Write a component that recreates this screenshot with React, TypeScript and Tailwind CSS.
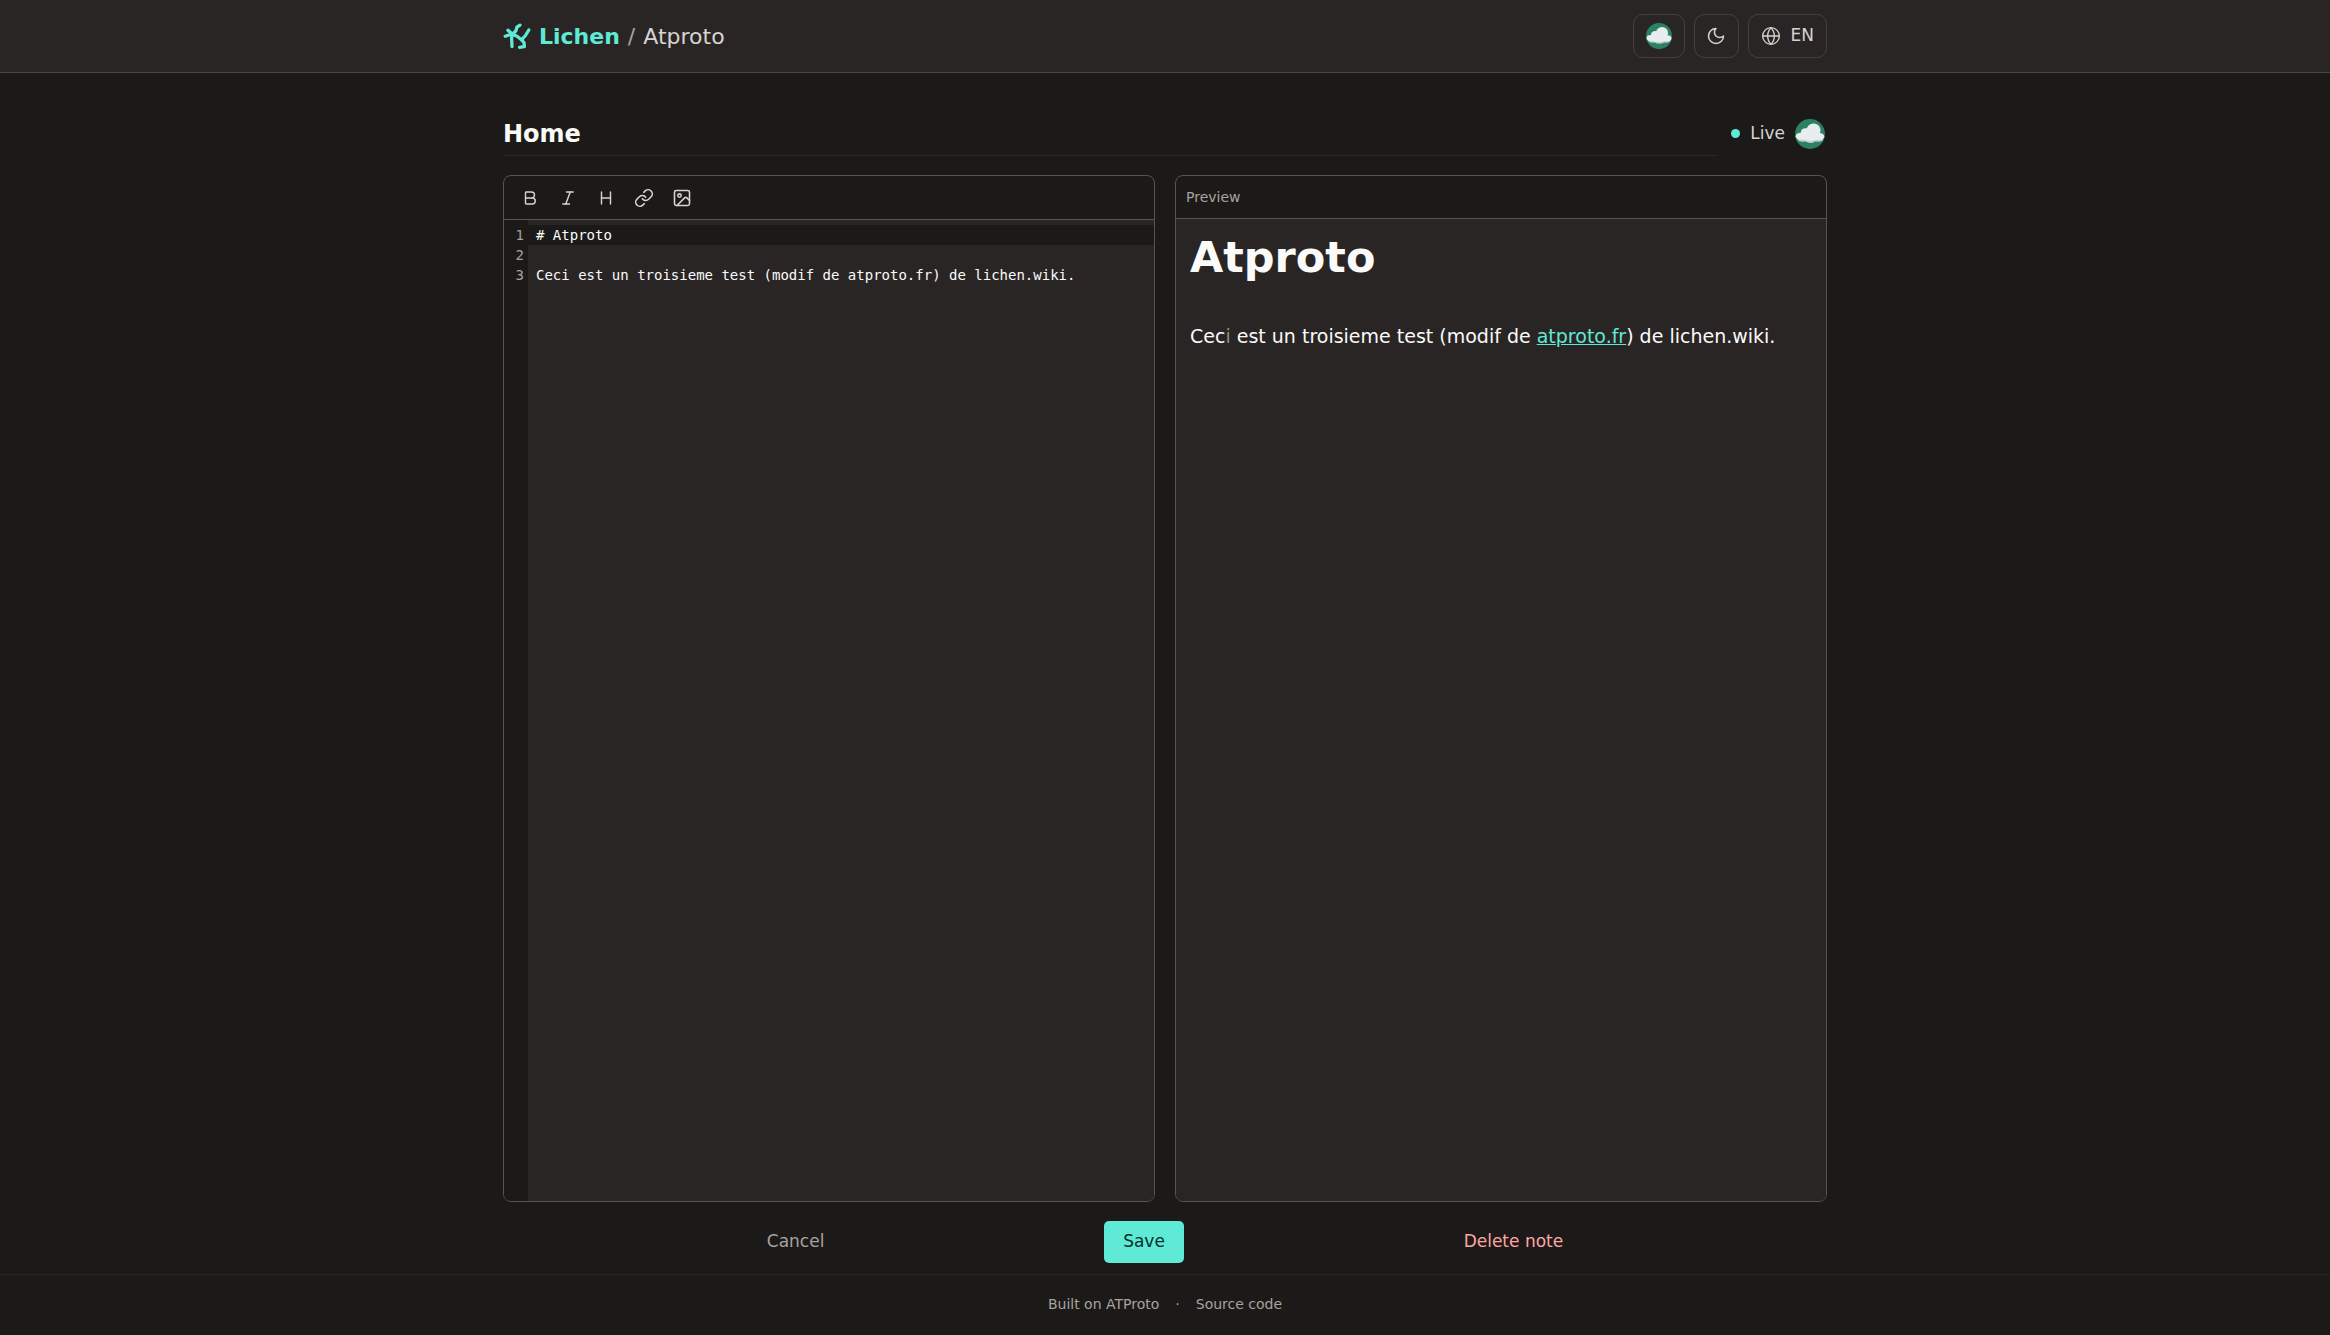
import React from "react";
import { Bold, Italic, Heading, Link, Image, Globe } from "lucide-react";

function LichenMark() {
  return (
    <svg viewBox="0 0 28 28" className="size-7" fill="none" stroke="currentColor" strokeWidth="3.3" strokeLinecap="round" strokeLinejoin="round" aria-hidden="true">
      <path d="M2.200 14.300 L6 13 L9.300 12.300 L14 14.200 L18.500 17.800 L22.500 13.500 L25.800 8" />
      <path d="M5 8.200 L9.300 12.300 L8.600 16 L9 24.500" />
      <path d="M9.300 12.300 L12.800 9 L14 5 L17 3.200" />
      <path d="M18.500 17.800 L21 20.500 L21.400 24.700 L16.500 25.300" />
    </svg>
  );
}

function MoonIcon() {
  return (
    <svg viewBox="0 0 24 24" className="size-5" fill="none" stroke="currentColor" strokeWidth="1.8" strokeLinecap="round" strokeLinejoin="round" aria-hidden="true">
      <path d="M12 3a6 6 0 0 0 9 9 9 9 0 1 1-9-9Z" />
    </svg>
  );
}

function CloudAvatar({ className }: { className: string }) {
  return (
    <svg viewBox="0 0 30 30" className={className} aria-hidden="true">
      <circle cx="15" cy="15" r="15" fill="#2b8263" />
      <g fill="#c3d0d5">
        <ellipse cx="8" cy="20" rx="5.500" ry="2.800" />
        <ellipse cx="15.500" cy="21" rx="5.500" ry="2.900" />
        <ellipse cx="23" cy="20" rx="5" ry="2.800" />
      </g>
      <g fill="#e8eeef">
        <ellipse cx="5.500" cy="17.300" rx="4.800" ry="3.500" />
        <circle cx="10.500" cy="14" r="4.800" />
        <circle cx="18.500" cy="11.500" r="7" />
        <ellipse cx="24.500" cy="17.500" rx="4.800" ry="3.500" />
        <ellipse cx="15" cy="18" rx="9" ry="3.800" />
      </g>
    </svg>
  );
}

const tools = [
  { label: "Bold", Icon: Bold, size: 18 },
  { label: "Italic", Icon: Italic, size: 18 },
  { label: "Heading", Icon: Heading, size: 18 },
  { label: "Link", Icon: Link, size: 20 },
  { label: "Image", Icon: Image, size: 20 },
];

const lines = ["# Atproto", "", "Ceci est un troisieme test (modif de atproto.fr) de lichen.wiki."];

const headerButton =
  "flex h-11 items-center justify-center rounded-[10px] border border-[#44403c] text-[#d6d3d1]";

export default function App() {
  return (
    <div className="flex min-h-screen flex-col bg-[#1c1a18] font-['DejaVu_Sans',sans-serif] text-[#fafaf9]">
      <header className="border-b border-[#4a4745] bg-[#2a2525]">
        <div className="mx-auto flex h-18 w-full max-w-[1356px] items-center justify-between px-4">
          <nav className="flex items-center text-[22px]" aria-label="Breadcrumb">
            <a href="#" className="flex items-center gap-2 font-bold text-[#5eead4]">
              <LichenMark />
              Lichen
            </a>
            <span className="px-2 text-[#a8a29e]">/</span>
            <a href="#" className="text-[#d6d3d1]">Atproto</a>
          </nav>
          <div className="flex items-center gap-[9px]">
            <button type="button" aria-label="Account" className={headerButton + " w-[52px]"}>
              <CloudAvatar className="size-[26px]" />
            </button>
            <button type="button" aria-label="Dark theme" className={headerButton + " w-[45px]"}>
              <MoonIcon />
            </button>
            <button type="button" className={headerButton + " gap-2.5 px-3 text-[17px]"}>
              <Globe size={20} strokeWidth={1.6} />
              EN
            </button>
          </div>
        </div>
      </header>

      <main className="mx-auto flex w-full max-w-[1356px] flex-1 flex-col px-4 pt-10 pb-[11px]">
        <div className="flex items-start">
          <h1 className="flex-1 border-b border-[#2c2927] py-[5px] text-2xl font-bold">Home</h1>
          <div className="flex h-[41px] items-center gap-2.5 pr-0.5 pl-3.5 text-[17px] text-[#d6d3d1]">
            <span className="size-[9px] rounded-full bg-[#5eead4]" />
            <span>Live</span>
            <CloudAvatar className="size-[30px]" />
          </div>
        </div>

        <div className="mt-[19px] grid flex-1 grid-cols-2 gap-5">
          <section className="flex flex-col overflow-hidden rounded-lg border border-[#57534e]" aria-label="Editor">
            <div className="flex h-11 items-center border-b border-[#57534e] px-[7px] text-[#d6d3d1]">
              {tools.map(({ label, Icon, size }) => (
                <button key={label} type="button" aria-label={label} className="flex h-9 w-[38px] items-center justify-center">
                  <Icon size={size} strokeWidth={1.9} />
                </button>
              ))}
            </div>
            <div className="flex flex-1 bg-[#2a2525] font-['DejaVu_Sans_Mono',monospace] text-sm leading-5">
              <div className="w-6 bg-[#1c1a18] pt-[5px] pr-1 text-right text-[#a8a29e]">
                {lines.map((_, i) => (
                  <div key={i}>{i + 1}</div>
                ))}
              </div>
              <div className="flex-1">
                <div className="h-[5px] bg-[#272624]" />
                {lines.map((line, i) => (
                  <div key={i} className={i === 0 ? "h-5 bg-[#1c1a18] pl-2" : "h-5 pl-2"}>{line}</div>
                ))}
              </div>
            </div>
          </section>

          <section className="flex flex-col overflow-hidden rounded-lg border border-[#57534e]" aria-label="Preview">
            <div className="flex h-[43px] items-center border-b border-[#57534e] px-2.5 text-sm text-[#a8a29e]">Preview</div>
            <div className="flex-1 bg-[#2a2525] px-3.5 pt-3">
              <h2 className="text-[43px] leading-[52px] font-bold">Atproto</h2>
              <p className="mt-[39px] text-[19px] leading-7">
                Cec<span className="text-[#8f8984]">i</span> est un troisieme test (modif de{" "}
                <a href="#" className="text-[#5eead4] underline">atproto.fr</a>) de lichen.wiki.
              </p>
            </div>
          </section>
        </div>

        <div className="mt-[19px] flex items-center justify-evenly gap-4 text-[17px]">
          <button type="button" className="h-[42px] text-[#a8a29e]">Cancel</button>
          <button type="button" className="h-[42px] rounded-[5px] bg-[#5eead4] px-[19px] text-[#042f2e]">Save</button>
          <button type="button" className="h-[42px] text-[#fca5a5]">Delete note</button>
        </div>
      </main>

      <footer className="flex h-[61px] items-center justify-center gap-4 border-t border-[#292524] pb-0.5 text-sm text-[#a8a29e]">
        <a href="#">Built on ATProto</a>
        <span>·</span>
        <a href="#">Source code</a>
      </footer>
    </div>
  );
}
